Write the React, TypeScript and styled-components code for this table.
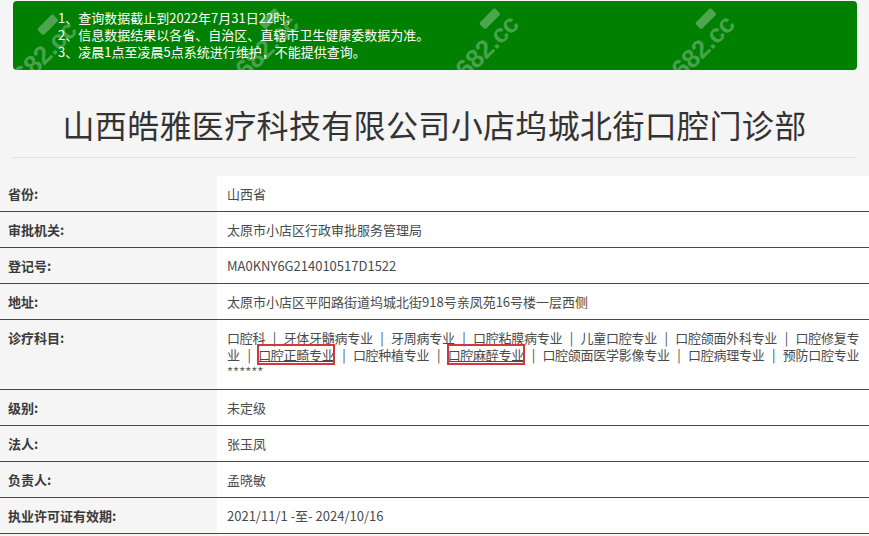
import React from "react";
import styled, { createGlobalStyle } from "styled-components";

const GlobalStyle = createGlobalStyle`
  html, body { margin: 0; padding: 0; }
  body {
    background: #f5f5f5;
    font-family: "Noto Sans CJK SC", "Noto Sans", sans-serif;
    color: #333;
  }
`;

const Page = styled.div`
  width: 869px;
  padding-top: 1px;
`;

const Notice = styled.div`
  position: relative;
  overflow: hidden;
  margin: 0 12px 0 13px;
  background: #008000;
  border-radius: 4px;
  padding: 8px 0 10px 45px;
  color: #fff;
  font-size: 13px;
  line-height: 17px;
`;

const NoticeLine = styled.div`
  position: relative;
  z-index: 1;
`;

const Watermark = styled.div<{ $x: number; $y: number }>`
  position: absolute;
  left: ${(p) => p.$x}px;
  top: ${(p) => p.$y}px;
  display: flex;
  flex-direction: column;
  align-items: flex-end;
  transform: rotate(-45deg);
  color: rgba(255, 255, 255, 0.3);
  pointer-events: none;
`;

const WmBadge = styled.span`
  width: 22px;
  height: 9px;
  margin-right: 6px;
  margin-bottom: 1px;
  border-radius: 2px;
  background: rgba(255, 255, 255, 0.3);
`;

const WmText = styled.span`
  font-family: "Liberation Sans", Arial, sans-serif;
  font-weight: 700;
  font-size: 26px;
  line-height: 24px;
  letter-spacing: -0.5px;
`;

const TitleBar = styled.div`
  margin: 37px 12px 0 12px;
  padding-bottom: 15px;
  border-bottom: 1px solid #e3e3e3;
`;

const Title = styled.h1`
  margin: 0;
  font-size: 32px;
  font-weight: 400;
  line-height: 35px;
  letter-spacing: 0.35px;
  text-align: center;
  color: #333;
`;

const Table = styled.div`
  margin-top: 18px;
`;

const Row = styled.div`
  display: grid;
  grid-template-columns: 217px 1fr;
  border-bottom: 1px solid #235c42;
  font-size: 13px;
  line-height: 17px;
`;

const Label = styled.div`
  padding: 9px 8px;
  font-weight: 700;
  color: #3a3a3a;
`;

const Value = styled.div<{ $justify?: boolean }>`
  background: #fff;
  padding: 9px 10px;
  color: #4a4a4a;
  text-align: ${(p) => (p.$justify ? "justify" : "left")};
  text-align-last: ${(p) => (p.$justify ? "justify" : "auto")};
  letter-spacing: ${(p) => (p.$justify ? "-0.4px" : "normal")};
`;

const Sep = styled.span`
  padding: 0 5px;
`;

const Marked = styled.span`
  text-decoration: underline;
  outline: 2px solid #d8353b;
  outline-offset: -1px;
`;

const Stars = styled.span`
  color: #666;
  letter-spacing: normal;
`;

const subjects = [
  "口腔科",
  "牙体牙髓病专业",
  "牙周病专业",
  "口腔粘膜病专业",
  "儿童口腔专业",
  "口腔颌面外科专业",
  "口腔修复专业",
  "口腔正畸专业",
  "口腔种植专业",
  "口腔麻醉专业",
  "口腔颌面医学影像专业",
  "口腔病理专业",
  "预防口腔专业",
];

const marked = new Set(["口腔正畸专业", "口腔麻醉专业"]);

const renderSubject = (s: string) => {
  if (marked.has(s)) return <Marked>{s}</Marked>;
  if (s === "口腔修复专业")
    return (
      <>
        口腔修复专
        <br />业
      </>
    );
  return s;
};

const rows: { label: string; value: React.ReactNode; justify?: boolean }[] = [
  { label: "省份:", value: "山西省" },
  { label: "审批机关:", value: "太原市小店区行政审批服务管理局" },
  { label: "登记号:", value: "MA0KNY6G214010517D1522" },
  { label: "地址:", value: "太原市小店区平阳路街道坞城北街918号亲凤苑16号楼一层西侧" },
  {
    label: "诊疗科目:",
    justify: true,
    value: (
      <>
        {subjects.map((s, i) => (
          <React.Fragment key={s}>
            {i > 0 && (
              <>
                {" "}
                <Sep>|</Sep>{" "}
              </>
            )}
            {renderSubject(s)}
          </React.Fragment>
        ))}{" "}
        <Stars>******</Stars>
      </>
    ),
  },
  { label: "级别:", value: "未定级" },
  { label: "法人:", value: "张玉凤" },
  { label: "负责人:", value: "孟晓敏" },
  { label: "执业许可证有效期:", value: "2021/11/1 -至- 2024/10/16" },
];

const watermarks = [
  { x: -10, y: 31 },
  { x: 212, y: 25 },
  { x: 432, y: 25 },
  { x: 648, y: 25 },
];

export default function App() {
  return (
    <Page>
      <GlobalStyle />
      <Notice>
        {watermarks.map((w, i) => (
          <Watermark key={i} $x={w.x} $y={w.y}>
            <WmBadge />
            <WmText>682.cc</WmText>
          </Watermark>
        ))}
        <NoticeLine>1、查询数据截止到2022年7月31日22时;</NoticeLine>
        <NoticeLine>2、信息数据结果以各省、自治区、直辖市卫生健康委数据为准。</NoticeLine>
        <NoticeLine>3、凌晨1点至凌晨5点系统进行维护，不能提供查询。</NoticeLine>
      </Notice>
      <TitleBar>
        <Title>山西皓雅医疗科技有限公司小店坞城北街口腔门诊部</Title>
      </TitleBar>
      <Table>
        {rows.map((r) => (
          <Row key={r.label}>
            <Label>{r.label}</Label>
            <Value $justify={r.justify}>{r.value}</Value>
          </Row>
        ))}
      </Table>
    </Page>
  );
}
